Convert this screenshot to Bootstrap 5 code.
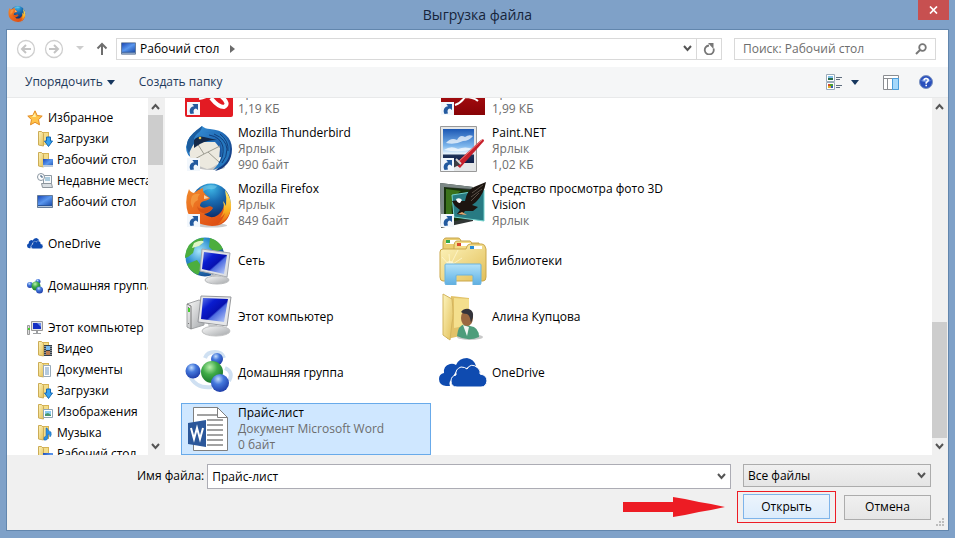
<!DOCTYPE html>
<html lang="ru">
<head>
<meta charset="utf-8">
<meta name="viewport" content="width=device-width, initial-scale=1">
<title>Выгрузка файла</title>
<link href="https://cdn.jsdelivr.net/npm/bootstrap@5.3.0/dist/css/bootstrap.min.css" rel="stylesheet">
<style>
  body { font: 12px/16px "Open Sans", "Noto Sans", sans-serif; color: #000; background: #7fa1c8; }
  button, input, select { font: inherit; color: inherit; }
  svg { display: block; flex: none; }
  ul { list-style: none; margin: 0; padding: 0; }
  .titlebar { height: 29px; display: grid; grid-template-columns: 48px 1fr 48px; }
  .caption { font-size: 14px; line-height: 30px; color: #16243a; font-weight: 400; }
  .plain { border: 0; background: none; padding: 0; display: flex; align-items: center; justify-content: center; }
  .plain.close-btn { width: 31px; height: 20px; background: #c75050; margin-right: 6px; justify-self: end; }
  .frame { border: 1px solid #6286ad; margin: 0 6px 7px; background: #fff; }
  .address-row { height: 37px; padding: 0 12px 0 9px; }
  .field { border: 1px solid #d9d9d9; height: 22px; background: #fff; }
  .crumb { color: #000; text-decoration: none; }
  .refresh { border-left: 1px solid #d9d9d9; width: 25px; }
  .search { flex: 0 0 202px; margin-left: 12px; }
  .search input { border: 0; outline: 0; min-width: 0; padding: 0 0 0 8px; color: #6d6d6d; background: none; }
  .search input::placeholder { color: #6d6d6d; opacity: 1; }
  .tools { height: 31px; background: #f5f6f7; border-bottom: 1px solid #e8e9ea; color: #1e395b; padding: 0 15px 0 18px; }
  .organize { gap: 4px; }
  .side { width: 158px; border-right: 1px solid #f0f0f0; }
  .tree { padding: 9px 0 0 20px; overflow: hidden; white-space: nowrap; }
  .tree a { height: 21px; display: flex; align-items: center; gap: 5px; color: #000; text-decoration: none; }
  .tree ul a { padding-left: 10px; gap: 4px; }
  .tree .group { margin-bottom: 21px; }
  .scroll { width: 16px; flex: none; background: #f0f0f0; padding-right: 1px; }
  .scroll button { height: 17px; width: 15px; flex: none; }
  .thumb { background: #cdcdcd; }
  .side-thumb { height: 50px; }
  .main-thumb { height: 36%; }
  .files { padding-left: 16px; overflow: hidden; }
  .file-grid { display: grid; grid-template-columns: 250px 250px; gap: 4px; grid-auto-rows: 52px; }
  .file { border: 1px solid transparent; padding: 0 0 0 3px; gap: 5px; display: flex; align-items: center; text-align: left; color: #000; background: none; }
  .file.chosen { background: #cfe7ff; border-color: #68aaea; }
  .file small { display: block; font-size: 12px; color: #6d6d6d; }
  .foot { background: #f0f0f0; height: 75px; padding: 9px 17px 0 130px; position: relative; }
  .foot label { padding: 4px 3px 0 0; }
  .file-name { border: 1px solid #acacb4; background: #fff; height: 25px; }
  .file-name input { border: 0; outline: 0; padding: 0 4px; min-width: 0; background: none; }
  .type-wrap { width: 188px; height: 23px; margin-left: 12px; border: 1px solid #acacac; background: linear-gradient(#f0f0f0, #e5e5e5); }
  .type-wrap select { appearance: none; border: 0; background: none; padding: 0 4px; outline: 0; flex: 1; }
  .actions { gap: 8px; margin-top: 2px; }
  .dialog-btn { width: 87px; height: 25px; border: 1px solid #acacac; border-radius: 0; padding: 0; background: linear-gradient(#f0f0f0, #e5e5e5); }
  .dialog-btn.go { border-color: #7eb4ea; background: linear-gradient(#ecf4fc, #dcecfc); }
  .callout { border: 1px solid #ed1c24; padding: 2px 5px 3px; }
  .grip { position: absolute; right: 3px; bottom: 3px; }
</style>
<script src="https://cdn.jsdelivr.net/npm/bootstrap@5.3.0/dist/js/bootstrap.bundle.min.js"></script>
</head>
<body class="vh-100 d-flex flex-column overflow-hidden">

<svg width="0" height="0" class="position-absolute" aria-hidden="true">
  <defs>
    <linearGradient id="gScreen" x1="0" y1="0" x2="1" y2="1"><stop offset="0" stop-color="#5b78e8"/><stop offset=".3" stop-color="#0a1ccf"/><stop offset=".55" stop-color="#0710b0"/><stop offset=".6" stop-color="#4d6be0"/><stop offset="1" stop-color="#c5d6fb"/></linearGradient>
    <linearGradient id="gDesk" x1="0" y1="0" x2="1" y2="1"><stop offset="0" stop-color="#1b49b8"/><stop offset=".5" stop-color="#5a97ee"/><stop offset="1" stop-color="#1e50ae"/></linearGradient>
    <linearGradient id="gGray" x1="0" y1="0" x2="1" y2="1"><stop offset="0" stop-color="#fbfbfb"/><stop offset="1" stop-color="#a4a7aa"/></linearGradient>
    <linearGradient id="gFold" x1="0" y1="0" x2="1" y2="1"><stop offset="0" stop-color="#fdf4bd"/><stop offset="1" stop-color="#e2bf58"/></linearGradient>
    <linearGradient id="gFox" x1="0" y1="0" x2="1" y2="1"><stop offset="0" stop-color="#f08a2c"/><stop offset=".5" stop-color="#e9641c"/><stop offset="1" stop-color="#d8440f"/></linearGradient>
    <linearGradient id="gTail" x1="0" y1="0" x2="0" y2="1"><stop offset="0" stop-color="#ffee73"/><stop offset=".6" stop-color="#f8b020"/><stop offset="1" stop-color="#e65c17"/></linearGradient>
    <radialGradient id="gSea" cx=".5" cy=".12" r=".75"><stop offset="0" stop-color="#3fb8e6"/><stop offset=".45" stop-color="#1a6cb2"/><stop offset="1" stop-color="#0b2d6b"/></radialGradient>
    <radialGradient id="gEarth" cx=".35" cy=".35" r=".7"><stop offset="0" stop-color="#a5e5fa"/><stop offset=".5" stop-color="#2d8fd0"/><stop offset="1" stop-color="#14498f"/></radialGradient>
    <radialGradient id="gBlue" cx=".4" cy=".28" r=".75"><stop offset="0" stop-color="#c2dcfb"/><stop offset=".4" stop-color="#4478dc"/><stop offset="1" stop-color="#1c3aa6"/></radialGradient>
    <radialGradient id="gGreen" cx=".4" cy=".28" r=".75"><stop offset="0" stop-color="#baf0ae"/><stop offset=".45" stop-color="#3fab47"/><stop offset="1" stop-color="#17722a"/></radialGradient>
    <linearGradient id="gBird" x1="0" y1="0" x2="1" y2="1"><stop offset="0" stop-color="#3d9ce0"/><stop offset=".5" stop-color="#2069b5"/><stop offset="1" stop-color="#122a6c"/></linearGradient>
    <linearGradient id="gSky" x1="0" y1="0" x2="0" y2="1"><stop offset="0" stop-color="#1b57b4"/><stop offset=".5" stop-color="#7db6ec"/><stop offset=".72" stop-color="#e6f2fc"/><stop offset=".78" stop-color="#1d3158"/><stop offset="1" stop-color="#101f4a"/></linearGradient>
    <linearGradient id="gGlass" x1="0" y1="0" x2="0" y2="1"><stop offset="0" stop-color="#b5e2f8"/><stop offset=".5" stop-color="#86c9ef"/><stop offset="1" stop-color="#5faee0"/></linearGradient>
    <linearGradient id="gRed" x1="0" y1="0" x2="0" y2="1"><stop offset="0" stop-color="#c9171c"/><stop offset="1" stop-color="#870306"/></linearGradient>

    <symbol id="link" viewBox="0 0 13 13"><path fill="#f2f7fc" d="M0 0h13v13H0z"/><path d="M3.500 12C1.500 8 3.500 4.500 7 4.200L5.300 2H11v6L9 6.400C6.500 6.800 6 9 7 11.500z" fill="#235a9f"/></symbol>

    <symbol id="fox" viewBox="0 0 48 48">
      <ellipse cx="27" cy="44.500" rx="15" ry="2" fill="#999" opacity=".5"/>
      <circle cx="26" cy="22" r="19.500" fill="url(#gSea)"/>
      <path d="M15 7q8-5 17-2-2 4-7 3-5 0-8 4z" fill="#7fd0ea" opacity=".5"/>
      <path d="M4 8q1 3 5 4 3-3 9-5-1 4 3 7l4 3q-1 2-6 3-4 1-4 5 3 3 7 1 4-2 6 1-3 5-9 6 7 6 14 1 5-4 6-10 3 3 1 9 6-7 3-18 4 8 2 17-4 13-18 13Q9 44 3 32-1 20 4 8z" fill="url(#gFox)"/>
      <path d="M40 9q7 8 6 19-3 12-14 16 6-5 8-12-2 3-5 5 6-8 3-17 2 2 3 5 1-8-1-16z" fill="url(#gTail)"/>
      <path d="M7 15q3-3 8-2-3 3-2 6-5 2-5 8-4-5-1-12z" fill="#f8a94c" opacity=".6"/>
      <path d="M19 14l5 3-5 1z" fill="#f9d2a5"/>
      <path d="M12 25q2 4 8 2 5-3 8 0-4 5-10 5-5-1-6-7z" fill="#c5430f" opacity=".5"/>
    </symbol>

    <symbol id="bird" viewBox="0 0 48 48">
      <ellipse cx="26" cy="42" rx="14" ry="3" fill="#888" opacity=".5"/>
      <path d="M17 1q3 3 8 3c13 1 22 8 22 20 0 12-7 20-17 22q7-5 7-14L9 34Q1 31 1 22 3 10 13 5z" fill="url(#gBird)"/>
      <path d="M4 24l7-7 19 0 5 6-1 14q-5 6-12 7L6 38z" fill="#ece9df"/>
      <path d="M12 18l7 11 16-8M6 36l13-7M23 27l11 10" stroke="#9c9b90" fill="none"/>
      <path d="M17 1q0 4-4 7-5 4-4 10l-5 10Q0 22 3 15q4-7 14-14z" fill="#1d5d9e"/>
      <path d="M9 15q4-5 10-3l13 3q-10 0-17 4l-6 4z" fill="#13294a"/>
      <circle cx="15" cy="13" r="1.300" fill="#e9c24d"/>
      <path d="M20 8q14-2 16 12 3 15-8 25 17-5 17-21Q44 6 20 8z" fill="#2678bf"/>
      <path d="M24 10q12 2 14 12 1 10-4 16M29 9q12 5 13 15 0 8-5 14M35 9q9 7 8 17" stroke="#123e7c" fill="none"/>
    </symbol>

    <symbol id="red1" viewBox="0 0 48 48"><rect width="48" height="48" rx="2" fill="#e31b23"/><path d="M14 29q9-1 15-9M26 29q7 9 13 9 6-3-2-10l-6-5" stroke="#fff" stroke-width="4" fill="none"/></symbol>
    <symbol id="red2" viewBox="0 0 48 48"><path d="M2 0h44v46H2z" fill="url(#gRed)"/><path d="M16 36q6-2 10-8 8 0 13 4" stroke="#fff" stroke-width="2" fill="none"/></symbol>

    <symbol id="paint" viewBox="0 0 48 48">
      <path d="M1.500 1.500h36v45h-36z" fill="#e5e7e8" stroke="#999"/>
      <path d="M4 4h31v34H4z" fill="url(#gSky)"/>
      <path d="M7 18q5-6 11-3 3-6 8-3 4-3 8-1-4 5-10 5-8 4-17 2zM5 25q7-5 14-1 7-3 15 0-12 4-29 1z" fill="#fff" opacity=".7"/>
      <path d="M16 39L42 15q3-2 3 1L21 43z" fill="#c51f2b"/><path d="M18 38L43 15" stroke="#f07d79"/>
      <path d="M18 34l4 5-4 2-4 2 1-6z" fill="#3b3e44"/><path d="M17 34l5 5" stroke="#d5d5d5" stroke-width="2"/>
    </symbol>

    <symbol id="eagle" viewBox="0 0 48 48">
      <path d="M1 2l33 4v34L2 47z" fill="#303635"/><path d="M5 6l26 3v28L5 42z" fill="#17310d"/>
      <path d="M7 8l15 2q-13 8-8 28l-7 2z" fill="#3b731c"/>
      <path d="M1 2l33 4-1 2L5 6v37l-3 4z" fill="#7d8987"/>
      <path d="M13 14l32-5v31L15 36z" fill="#287b83" stroke="#73d3cd"/>
      <path d="M26 20Q28 9 35 6L47 1q-2 12-10 20l-4 3 6 2-5 4-8 0-3 4-5-1 3-4-5-4-3-5q4-1 7 0z" fill="#1c1510"/>
      <path d="M33 12l11-8M32 16l11-8M32 20l8-8" stroke="#5b5148"/>
      <path d="M17 18q4-2 6 1l-2 3q-3 0-4-4z" fill="#fff"/><path d="M19 33l4-2 5 3z" fill="#e5a66c"/>
    </symbol>

    <symbol id="net" viewBox="0 0 48 48">
      <circle cx="20" cy="20" r="19.500" fill="url(#gEarth)"/>
      <path d="M4 8q8-8 15-7l-3 7-6 1-2 7-5 4-3 1q0-7 4-13zM2 27l10-4 5 7-4 8Q4 34 2 27zM25 1q10 3 13 11l-8 3-6-5z" fill="#4cae3e"/>
      <path d="M9 6q8-4 10-1l-5 4-7 2z" fill="#dff4c6"/>
      <path d="M17 12l28 4-3 24-27-6z" fill="#dfe1e5" stroke="#a2a6ad"/>
      <path d="M19 15l23 3-3 19-22-5z" fill="url(#gScreen)"/>
      <path d="M26 37l8 2v4h-8z" fill="#c4c6c9"/><ellipse cx="32" cy="43" rx="12" ry="4" fill="url(#gGray)" stroke="#b9bbbd"/>
    </symbol>
    <symbol id="pc" viewBox="0 0 48 48">
      <path d="M2 11l12-4 5 2v23L6 36l-4-2z" fill="url(#gGray)" stroke="#a2a4a6"/><path d="M2 11l4 2v23M3 14l1 1M3 30l1 1" stroke="#777" fill="none"/>
      <path d="M3 15h2v4H3z" fill="#45ce2e"/>
      <path d="M16 3l30 1-4 29-29-4z" fill="#e6e7e9" stroke="#96989c"/><path d="M18 5l25 1-4 23-23-3z" fill="url(#gScreen)"/>
      <path d="M23 31l9 1 2 7h-9z" fill="#c6c8ca"/><ellipse cx="31" cy="38" rx="14" ry="5" fill="url(#gGray)" stroke="#c0c1c2"/>
    </symbol>
    <symbol id="home" viewBox="0 0 48 48">
      <path d="M20 9q2-6 10-6 7 0 9 6M40 19q9 4 4 13M5 27q6 13 22 11" stroke="#cfe0f2" stroke-width="4" fill="none"/>
      <circle cx="32" cy="10" r="6" fill="url(#gBlue)"/><circle cx="8" cy="22" r="7.500" fill="url(#gBlue)"/>
      <circle cx="27" cy="23" r="11" fill="url(#gGreen)"/><circle cx="35" cy="34" r="9" fill="url(#gBlue)"/>
    </symbol>
    <symbol id="word" viewBox="0 0 48 48">
      <path d="M8.500 2.500h24l10 10v33h-34z" fill="#fff" stroke="#7f7f7f"/><path d="M32.500 2.500v10h10" fill="none" stroke="#7f7f7f"/>
      <path d="M12 10h20M22 15h16M22 20h16M22 25h16M22 30h16M22 35h16M22 40h16" stroke="#848484" stroke-width="1.500"/>
      <path d="M3 18l18-3v27L3 39z" fill="#2b579a"/><path d="M6 23l3 11 3-11 3 11 3-11" fill="none" stroke="#fff" stroke-width="2"/>
    </symbol>
    <symbol id="libs" viewBox="0 0 48 48">
      <path d="M4 6q0-5 3-5h12q3 0 3 5h18v12H4z" fill="#ebcf72" stroke="#c6a44b"/><path d="M7 3h14v4H7z" fill="#fff"/>
      <path d="M7 3h4v3H7z" fill="#35a84c"/><path d="M15 10q0-6 3-6h13q2 0 2 5h12v9H15z" fill="#f3dc87" stroke="#c6a44b"/><path d="M18 6h14v3H18z" fill="#fff"/><path d="M18 6h4v3h-4z" fill="#d84b2d"/>
      <path d="M1 15q0-3 3-3h23q1-5 4-5h12q3 0 4 5v28q0 4-3 4H4q-3 0-3-4z" fill="url(#gFold)" stroke="#cba74b"/>
      <path d="M31 9h12v3H31z" fill="#fff"/><path d="M31 9h4v3h-4z" fill="#288cd5"/>
      <path d="M11 29l8-16M11 29L3 20M11 29l-1-12M11 29l12-8" stroke="#fff8cf" opacity=".8" fill="none"/><circle cx="11" cy="28" r="4" fill="#fffbe0" opacity=".7"/>
      <path d="M6 28q0-1 1-1h34q1 0 1 1v18q0 2-2 2h-6v-9q0-1-1-1H18q-1 0-1 1v9H8q-2 0-2-2z" fill="url(#gGlass)" stroke="#6ab3df"/>
    </symbol>
    <symbol id="user" viewBox="0 0 48 48">
      <path d="M12 3l18 2v36L8 46z" fill="#e2c268"/><path d="M15 5l15 1v26l-15 3z" fill="#f4df8d"/><path d="M4 1l9 5q2 17 0 24l-2 17-7-5z" fill="url(#gFold)" stroke="#d3b55f"/>
      <ellipse cx="31" cy="44" rx="13" ry="3" fill="#777" opacity=".4"/>
      <path d="M18 43q1-11 8-12l5 2q9 1 9 11-11 5-22-1z" fill="#4e9d7b"/><path d="M24 32l6 2-2 9z" fill="#f1f5f2"/>
      <ellipse cx="28" cy="25" rx="6" ry="8" fill="#9a6840"/><path d="M22 19q3-4 8-3 5 2 4 8l-2 6q-1-8-4-9-4 0-6-2z" fill="#34343b"/>
    </symbol>
    <symbol id="cloud" viewBox="0 0 48 30">
      <path d="M11 28H7q-7-1-7-7 0-5 5-6-1-7 6-9 3-1 6 1 3-7 11-7 7 1 9 8-7-2-11 4-11-2-12 9-5 2-3 7z" fill="#0f4bb0"/>
      <path d="M18 29q-6 0-6-6 0-5 5-6-1-6 5-8 4 0 6 2 4-7 11-1 3 3 2 6 7 1 7 7-1 6-6 6z" fill="#0f4bb0" stroke="#fff"/>
    </symbol>

    <symbol id="deskS" viewBox="0 0 16 13"><path d="M.5.500h15v12H.5z" fill="#27549c" stroke="#667c98"/><path d="M1 1h14v9H1z" fill="url(#gDesk)"/><path d="M1 11h14v1H1z" fill="#b4c5d8"/></symbol>
    <symbol id="foldS" viewBox="0 0 16 16"><path d="M6 1h6v13H6z" fill="#d6b354"/><path d="M4 2h7v12H4z" fill="#f3dd8a"/><path d="M1.500.500h3l2 2V15l-5-1z" fill="url(#gFold)" stroke="#ccac56"/></symbol>
    <symbol id="starS" viewBox="0 0 16 16"><path d="M8 .8l2.200 4.700 5 .6-3.700 3.500 1 5.200L8 12.300l-4.500 2.500 1-5.200L.8 6.100l5-.6z" fill="#ffc44a" stroke="#e38a21"/><path d="M8 3l1 4H5z" fill="#fff0a5"/></symbol>
    <symbol id="dlS" viewBox="0 0 16 16"><use href="#foldS"/><path d="M9.500 6h4v4h2L11.500 15.500 7.500 10h2z" fill="#37a1ef" stroke="#1469b4"/></symbol>
    <symbol id="fdeskS" viewBox="0 0 16 16"><use href="#foldS"/><path d="M6 7h10v8H6z" fill="url(#gDesk)"/><path d="M6 13h10v2H6z" fill="#bccbdc"/></symbol>
    <symbol id="recentS" viewBox="0 0 16 16"><path d="M6.500 2.500h8v8h-8z" fill="#f7f9fb" stroke="#8e9aa4"/><path d="M8 5h5M8 7h5" stroke="#619dbf"/><path d="M4.500 10.500h10l1 4H5.500z" fill="#d8dde1" stroke="#8d959c"/><circle cx="4" cy="4" r="3.500" fill="#fff" stroke="#8a96a1"/><path d="M4 2v2h2" stroke="#37597b" fill="none"/></symbol>
    <symbol id="videoS" viewBox="0 0 16 16"><use href="#foldS"/><path d="M7 4h8v11H7z" fill="#333e49"/><path d="M9 5h4v4H9z" fill="#75b7ed"/><path d="M9 10h4v4H9z" fill="#bc7d51"/><path d="M8 5v10M14 5v10" stroke="#ddd" stroke-dasharray="1 1"/></symbol>
    <symbol id="docS" viewBox="0 0 16 16"><use href="#foldS"/><path d="M6.500 3.500h7v11h-7z" fill="#fff" stroke="#9aabb9"/><path d="M8 6h4M8 8h4M8 10h4M8 12h4" stroke="#6894bd"/></symbol>
    <symbol id="imgS" viewBox="0 0 16 16"><use href="#foldS"/><path d="M6.500 5.500h9v8h-9z" fill="#fff" stroke="#90a5b4"/><path d="M8 7h6v5H8z" fill="#8acbf0"/><path d="M8 10l3-1 3 2v1H8z" fill="#48966d"/></symbol>
    <symbol id="musicS" viewBox="0 0 16 16"><use href="#foldS"/><path d="M10 3q1 3 4 4 1 3-1 5 0-3-2-3v4q-1 3-4 2-1-3 2-4V3z" fill="#2c8fe3" stroke="#1464ac" stroke-width=".5"/></symbol>
    <symbol id="down" viewBox="0 0 9 7"><path d="M1 1l3.500 4L8 1" fill="none" stroke="#555" stroke-width="2"/></symbol>
  </defs>
</svg>

<header class="titlebar">
  <svg class="ms-2 mt-1" width="18" height="20" viewBox="0 0 48 48"><use href="#fox"/></svg>
  <h1 class="caption text-center m-0">Выгрузка файла</h1>
  <button class="plain close-btn" aria-label="Закрыть"><svg width="9" height="8" viewBox="0 0 9 8"><path d="M1 .5l7 7M8 .5l-7 7" stroke="#fff" stroke-width="1.700"/></svg></button>
</header>

<main class="frame flex-fill d-flex flex-column overflow-hidden">
  <div class="address-row d-flex align-items-center flex-shrink-0">
    <button class="plain" aria-label="Назад"><svg width="20" height="20" viewBox="0 0 20 20"><circle cx="10" cy="10" r="8.500" fill="none" stroke="#cfcfcf" stroke-width="1.300"/><path d="M15 10H6M10 6l-4 4 4 4" fill="none" stroke="#c4c4c4" stroke-width="2"/></svg></button>
    <button class="plain ms-2" aria-label="Вперёд"><svg width="20" height="20" viewBox="0 0 20 20"><circle cx="10" cy="10" r="8.500" fill="none" stroke="#cfcfcf" stroke-width="1.300"/><path d="M5 10h9M10 6l4 4-4 4" fill="none" stroke="#c4c4c4" stroke-width="2"/></svg></button>
    <button class="plain ms-2 me-2" aria-label="Последние места"><svg class="ms-1" width="8" height="5" viewBox="0 0 8 5"><path d="M0 0h8L4 4z" fill="#cdcdcd"/></svg></button>
    <button class="plain ms-1 me-2" aria-label="Вверх"><svg width="12" height="14" viewBox="0 0 12 14"><path d="M6 13V2M1.500 6.500L6 2l4.500 4.500" fill="none" stroke="#6e6e6e" stroke-width="2"/></svg></button>
    <nav class="field d-flex align-items-center flex-fill" aria-label="Адрес">
      <svg class="mx-1" width="15" height="13"><use href="#deskS"/></svg>
      <a class="crumb flex-shrink-0" href="#">Рабочий стол</a>
      <svg class="ms-2 me-auto" width="10" height="10" viewBox="0 0 10 10"><path d="M3 1l5 4-5 4z" fill="#6b6b6b"/></svg>
      <button class="plain me-1" aria-label="Журнал адресов"><svg width="9" height="7"><use href="#down"/></svg></button>
      <button class="plain refresh h-100" aria-label="Обновить"><svg width="12" height="12" viewBox="0 0 12 12"><path d="M10.500 5.500A4.500 4.500 0 1 1 6 2.500" fill="none" stroke="#777" stroke-width="1.800"/><path d="M5 0h5.500v6z" fill="#777"/></svg></button>
    </nav>
    <div class="field search d-flex align-items-center">
      <input class="flex-fill" type="search" aria-label="Поиск" placeholder="Поиск: Рабочий стол">
      <svg class="me-2" width="12" height="12" viewBox="0 0 12 12"><circle cx="7.500" cy="4.500" r="3.300" fill="none" stroke="#777" stroke-width="1.800"/><path d="M5 7l-4 4" stroke="#777" stroke-width="2"/></svg>
    </div>
  </div>

  <div class="tools d-flex align-items-center flex-shrink-0">
    <button class="plain organize">Упорядочить<svg width="8" height="5" viewBox="0 0 8 5"><path d="M0 0h8L4 5z" fill="#17375e"/></svg></button>
    <button class="plain ms-4">Создать папку</button>
    <button class="plain ms-auto" aria-label="Вид"><svg width="17" height="16" viewBox="0 0 17 16"><path d="M.5.500h8v7h-8zM.5 8.500h8v7h-8z" fill="#fff" stroke="#9aabba"/><path d="M2 2h5v2H2z" fill="#7ebfe9"/><path d="M2 4h5v2H2z" fill="#286c4a"/><path d="M2 10h2v2H2z" fill="#cf4b2d"/><path d="M4 10h3v2H4z" fill="#4c9f35"/><path d="M2 12h3v2H2z" fill="#e0b123"/><path d="M5 12h2v2H5z" fill="#315cba"/><path d="M10 3.500h6M10 5.500h4M10 11.500h6M10 13.500h4" stroke="#5e6d7e"/></svg></button>
    <button class="plain ms-2" aria-label="Другие виды"><svg width="8" height="5" viewBox="0 0 8 5"><path d="M0 0h8L4 5z" fill="#17375e"/></svg></button>
    <button class="plain ms-4" aria-label="Область просмотра"><svg class="me-1" width="16" height="15" viewBox="0 0 16 15"><path d="M.5.500h15v14H.5z" fill="#fff" stroke="#8a8d91"/><path d="M1 3.500h14M4.500 4v10" stroke="#8a8d91"/><path d="M9.500 3.500h6v11h-6z" fill="#a5d8fb" stroke="#4a9ddb"/></svg></button>
    <button class="plain ms-3" aria-label="Справка"><svg width="14" height="14" viewBox="0 0 14 14"><circle cx="7" cy="7" r="6.500" fill="#2a50bc" stroke="#7c93bf"/><path d="M2 6q5-7 10 0-5 2-10 0z" fill="#8baeed" opacity=".7"/><path d="M5 5.500Q5.200 3.500 7 3.500q2.200 0 2.200 1.800Q9 6.500 7.200 7.500v1.200" fill="none" stroke="#fff" stroke-width="1.500"/><path d="M6.400 9.800h1.600v1.400H6.400z" fill="#fff"/></svg></button>
  </div>

  <div class="d-flex flex-fill overflow-hidden">
    <aside class="side d-flex flex-shrink-0">
      <nav class="tree flex-fill" aria-label="Папки">
        <div class="group"><a href="#"><svg width="16" height="16"><use href="#starS"/></svg>Избранное</a>
          <ul>
            <li><a href="#"><svg width="16" height="16"><use href="#dlS"/></svg>Загрузки</a></li>
            <li><a href="#"><svg width="16" height="16"><use href="#fdeskS"/></svg>Рабочий стол</a></li>
            <li><a href="#"><svg width="16" height="16"><use href="#recentS"/></svg>Недавние места</a></li>
            <li><a href="#"><svg width="16" height="13"><use href="#deskS"/></svg>Рабочий стол</a></li>
          </ul></div>
        <div class="group"><a href="#"><svg width="16" height="11" viewBox="0 0 48 30" preserveAspectRatio="none"><use href="#cloud"/></svg>OneDrive</a></div>
        <div class="group"><a href="#"><svg width="16" height="16" viewBox="0 0 16 16"><circle cx="11" cy="3.500" r="2.500" fill="url(#gBlue)"/><circle cx="3" cy="7" r="3" fill="url(#gBlue)"/><circle cx="9" cy="8" r="4.500" fill="url(#gGreen)"/><circle cx="12.500" cy="12" r="3.500" fill="url(#gBlue)"/></svg>Домашняя группа</a></div>
        <div><a href="#"><svg width="16" height="16" viewBox="0 0 16 16"><path d="M.5 5.500h2v9h-2z" fill="#ddd" stroke="#999"/><path d="M1 8h2v2H1z" fill="#45ce2e"/><path d="M4.500 1.500h11v9h-11z" fill="#e4e5e6" stroke="#999"/><path d="M6 3h8v6H6z" fill="#1530c4"/><path d="M10 3h4v4z" fill="#6f8eea"/><path d="M9 11h2v2h3v1H6v-1h3z" fill="#9ea1a4"/></svg>Этот компьютер</a>
          <ul>
            <li><a href="#"><svg width="16" height="16"><use href="#videoS"/></svg>Видео</a></li>
            <li><a href="#"><svg width="16" height="16"><use href="#docS"/></svg>Документы</a></li>
            <li><a href="#"><svg width="16" height="16"><use href="#dlS"/></svg>Загрузки</a></li>
            <li><a href="#"><svg width="16" height="16"><use href="#imgS"/></svg>Изображения</a></li>
            <li><a href="#"><svg width="16" height="16"><use href="#musicS"/></svg>Музыка</a></li>
            <li><a href="#"><svg width="16" height="16"><use href="#fdeskS"/></svg>Рабочий стол</a></li>
          </ul></div>
      </nav>
      <div class="scroll d-flex flex-column">
        <button class="plain" aria-label="Вверх по дереву"><svg width="9" height="7" viewBox="0 0 9 7"><path d="M1 6l3.500-4L8 6" fill="none" stroke="#555" stroke-width="2"/></svg></button>
        <div class="thumb side-thumb"></div>
        <button class="plain mt-auto" aria-label="Вниз по дереву"><svg width="9" height="7"><use href="#down"/></svg></button>
      </div>
    </aside>

    <section class="files flex-fill d-flex flex-column justify-content-end" aria-label="Файлы">
      <div class="file-grid">
        <button class="file"><svg width="48" height="48"><use href="#red1"/><use href="#link" x="2" y="33" width="13" height="13"/></svg><span>Reader<small>Ярлык</small><small>1,19 КБ</small></span></button>
        <button class="file"><svg width="48" height="48"><use href="#red2"/><use href="#link" x="2" y="33" width="13" height="13"/></svg><span>Reader<small>Ярлык</small><small>1,99 КБ</small></span></button>
        <button class="file"><svg width="48" height="48"><use href="#bird"/><use href="#link" x="2" y="33" width="13" height="13"/></svg><span>Mozilla Thunderbird<small>Ярлык</small><small>990 байт</small></span></button>
        <button class="file"><svg width="48" height="48"><use href="#paint"/><use href="#link" x="2" y="33" width="13" height="13"/></svg><span>Paint.NET<small>Ярлык</small><small>1,02 КБ</small></span></button>
        <button class="file"><svg width="48" height="48"><use href="#fox"/><use href="#link" x="2" y="33" width="13" height="13"/></svg><span>Mozilla Firefox<small>Ярлык</small><small>849 байт</small></span></button>
        <button class="file"><svg width="48" height="48"><use href="#eagle"/><use href="#link" x="2" y="33" width="13" height="13"/></svg><span>Средство просмотра фото 3D<br>Vision<small>Ярлык</small></span></button>
        <button class="file"><svg width="48" height="48"><use href="#net"/></svg><span>Сеть</span></button>
        <button class="file"><svg width="48" height="48"><use href="#libs"/></svg><span>Библиотеки</span></button>
        <button class="file"><svg width="48" height="48"><use href="#pc"/></svg><span>Этот компьютер</span></button>
        <button class="file"><svg width="48" height="48"><use href="#user"/></svg><span>Алина Купцова</span></button>
        <button class="file"><svg width="48" height="48"><use href="#home"/></svg><span>Домашняя группа</span></button>
        <button class="file"><svg width="48" height="30"><use href="#cloud"/></svg><span>OneDrive</span></button>
        <button class="file chosen" aria-pressed="true"><svg width="48" height="48"><use href="#word"/></svg><span>Прайс-лист<small>Документ Microsoft Word</small><small>0 байт</small></span></button>
      </div>
    </section>
    <div class="scroll d-flex flex-column">
      <button class="plain" aria-label="Прокрутить вверх"><svg width="9" height="7" viewBox="0 0 9 7"><path d="M1 6l3.500-4L8 6" fill="none" stroke="#555" stroke-width="2"/></svg></button>
      <div class="flex-fill d-flex flex-column justify-content-end"><div class="thumb main-thumb"></div></div>
      <button class="plain" aria-label="Прокрутить вниз"><svg width="9" height="7"><use href="#down"/></svg></button>
    </div>
  </div>

  <footer class="foot flex-shrink-0">
    <div class="d-flex align-items-start">
      <label class="me-auto" for="fileName">Имя файла:</label>
      <div class="file-name d-flex align-items-center flex-fill">
        <input id="fileName" class="flex-fill" type="text" value="Прайс-лист">
        <button class="plain me-1" aria-label="Показать имена"><svg width="9" height="7"><use href="#down"/></svg></button>
      </div>
      <div class="type-wrap d-flex align-items-center pe-1">
        <select aria-label="Тип файлов"><option>Все файлы</option></select>
        <svg width="9" height="7"><use href="#down"/></svg>
      </div>
    </div>
    <div class="actions d-flex justify-content-end align-items-center">
      <svg class="me-1" width="102" height="20" viewBox="0 0 102 20"><path d="M0 5h50V0l12 2 14 3 12 2 14 3-14 3-12 2-14 3-12 2v-5H0z" fill="#ed1c24"/></svg>
      <div class="callout"><button class="dialog-btn go">Открыть</button></div>
      <button class="dialog-btn">Отмена</button>
    </div>
    <svg class="grip" width="9" height="9" viewBox="0 0 9 9"><path d="M6 0h2v2H6zM3 3h2v2H3zM6 3h2v2H6zM0 6h2v2H0zM3 6h2v2H3zM6 6h2v2H6z" fill="#bdbdbd"/></svg>
  </footer>
</main>
</body>
</html>
